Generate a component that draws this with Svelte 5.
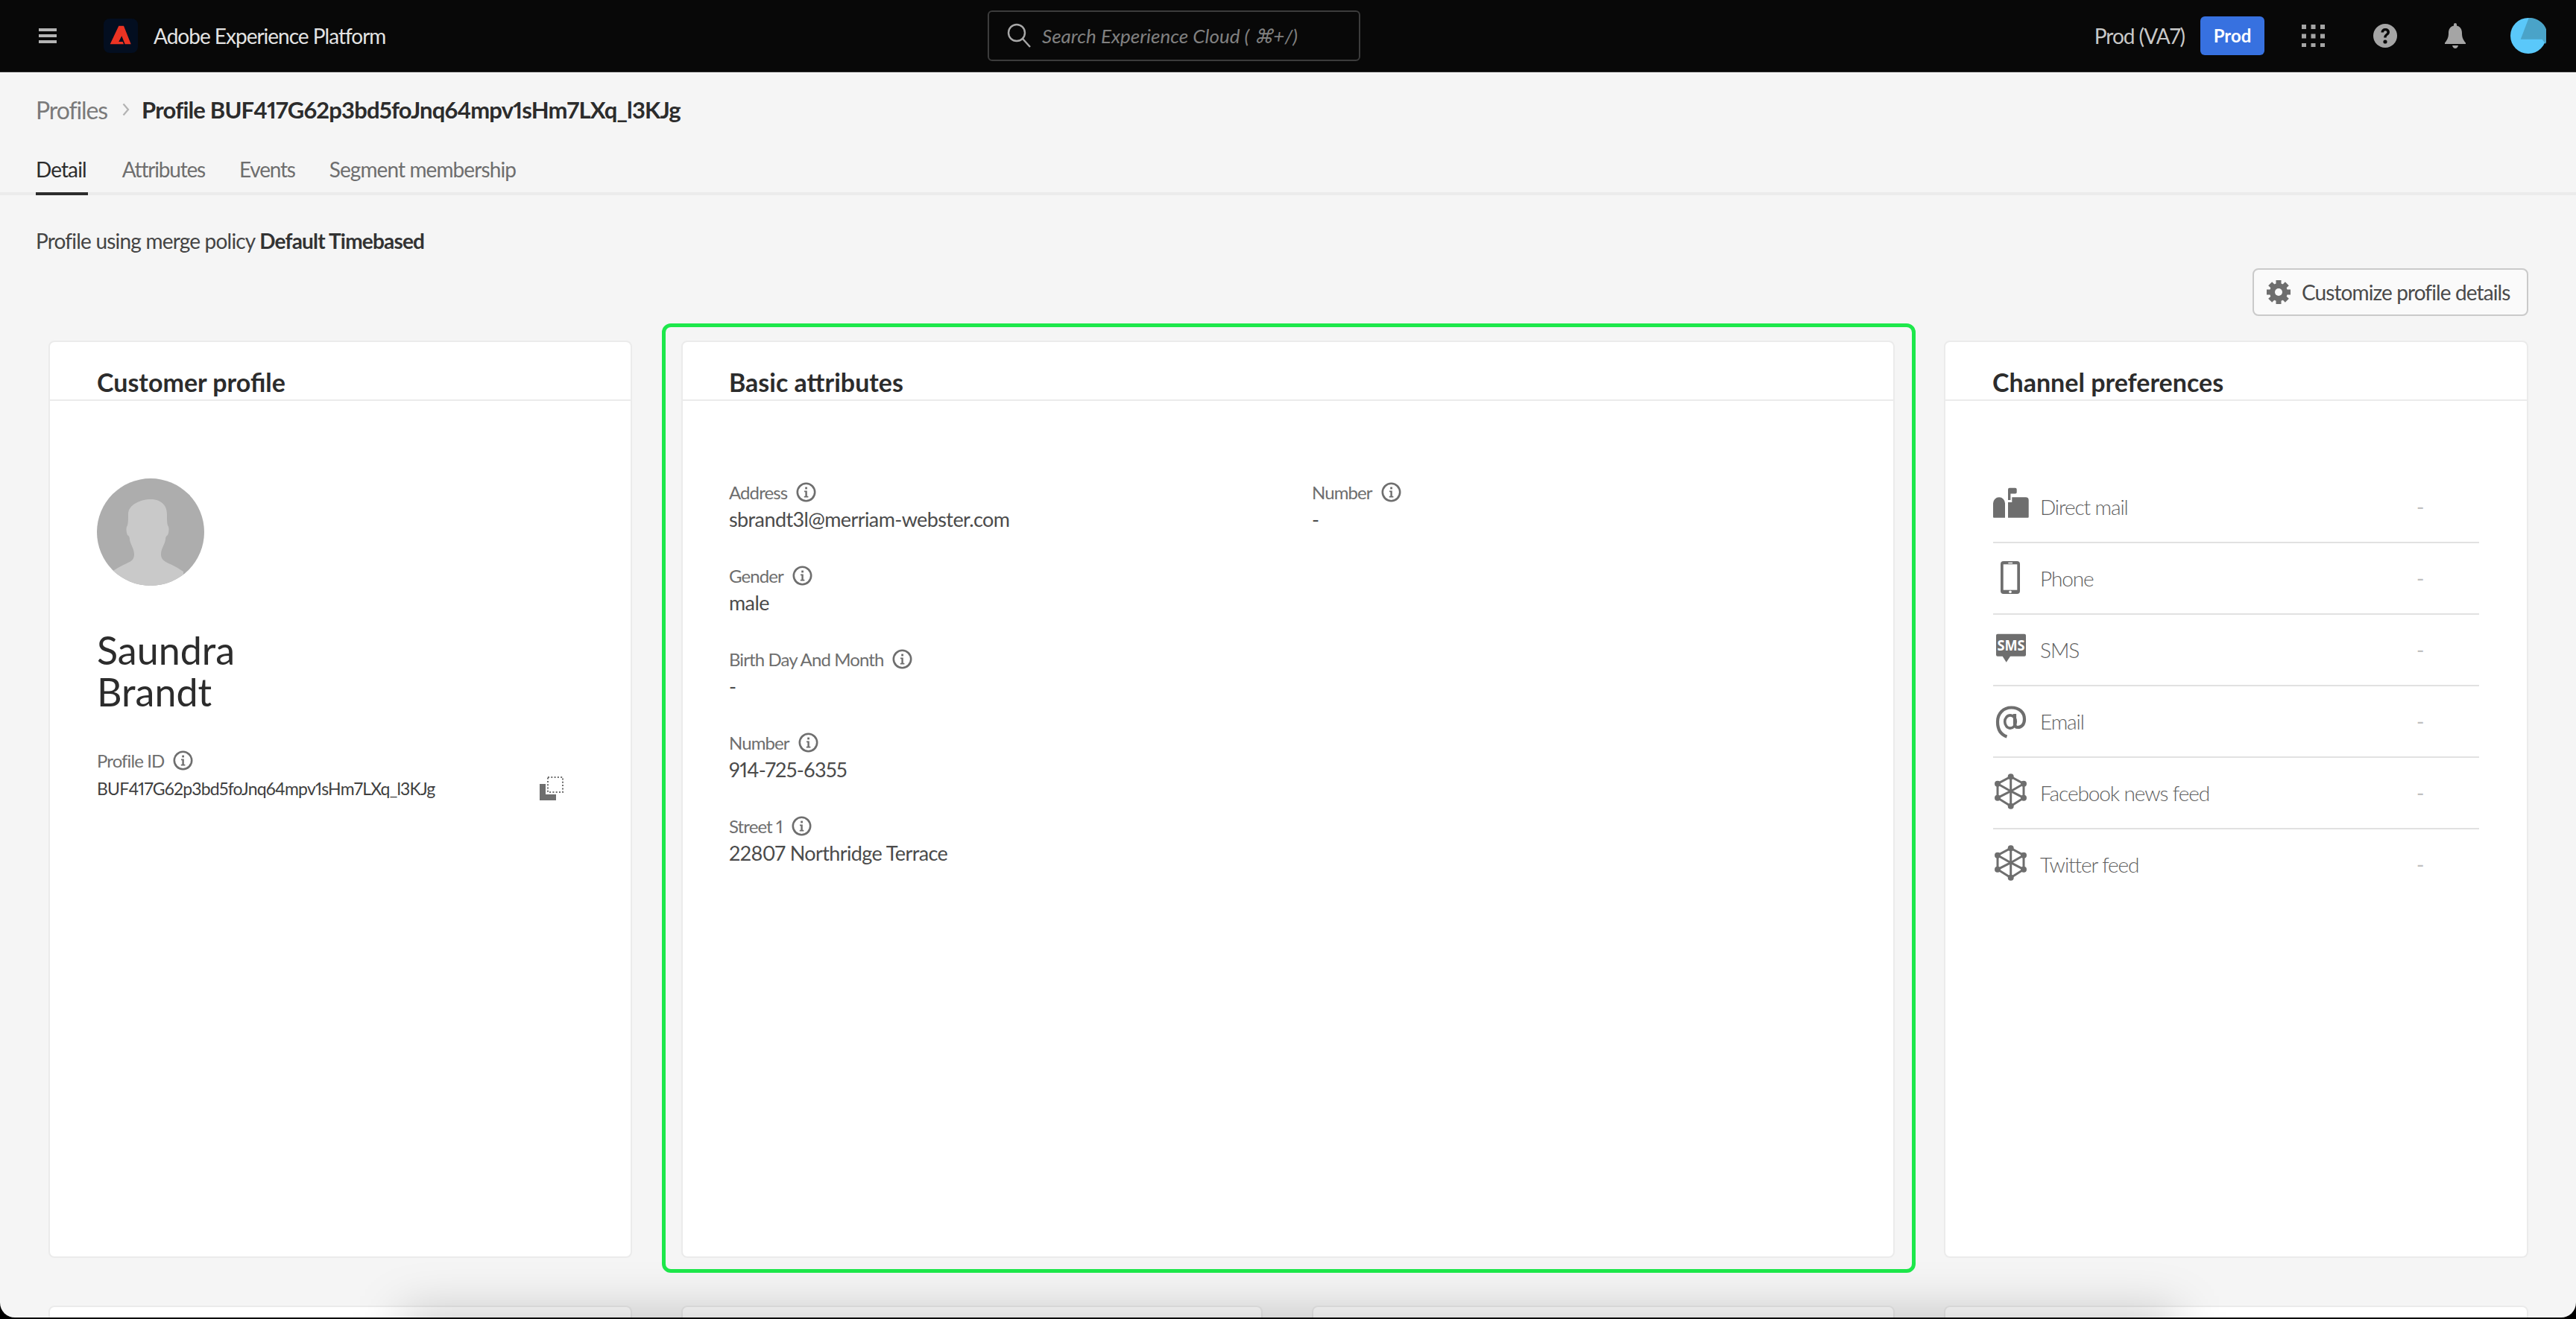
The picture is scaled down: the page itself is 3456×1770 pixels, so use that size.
<script>
	const tabs = ['Detail', 'Attributes', 'Events', 'Segment membership'];
	const fields = [
		{ label: 'Address', value: 'sbrandt3l@merriam-webster.com' },
		{ label: 'Gender', value: 'male' },
		{ label: 'Birth Day And Month', value: '-' },
		{ label: 'Number', value: '914-725-6355' },
		{ label: 'Street 1', value: '22807 Northridge Terrace' }
	];
	const channels = [
		{ name: 'Direct mail', icon: 'mail' },
		{ name: 'Phone', icon: 'phone' },
		{ name: 'SMS', icon: 'sms' },
		{ name: 'Email', icon: 'email' },
		{ name: 'Facebook news feed', icon: 'net' },
		{ name: 'Twitter feed', icon: 'net' }
	];
	const hex = [
		[23.7, 2.3],
		[41, 11.7],
		[41, 30.7],
		[23.7, 41.7],
		[6, 30.7],
		[6, 11.7]
	];
	const teeth = [0, 45, 90, 135, 180, 225, 270, 315];
</script>

{#snippet info()}
	<svg class="info" viewBox="0 0 27 27" width="27" height="27">
		<circle cx="13.5" cy="13.5" r="11.7" fill="none" stroke="#6e6e6e" stroke-width="2.6" />
		<rect x="12.2" y="6.6" width="2.8" height="2.8" fill="#6e6e6e" />
		<path d="M11 11.6h3.8v7.2h1.6v1.6h-5.6v-1.6h1.6v-5.6h-1.4z" fill="#6e6e6e" />
	</svg>
{/snippet}

<div class="page">
	<header class="topbar">
		<button class="menu" aria-label="Menu"><span></span><span></span><span></span></button>
		<div class="logo">
			<svg viewBox="0 0 46 46" width="46" height="46">
				<polygon
					points="8.7,34.3 20.3,9.7 27,9.7 36.7,34.3 28.7,34.3 24.3,23.3 20.3,31 25.7,31 27,34.3"
					fill="#eb3323"
				/>
			</svg>
		</div>
		<div class="product">Adobe Experience Platform</div>
		<div class="search">
			<svg viewBox="0 0 32 34" width="32" height="34">
				<circle cx="13" cy="13" r="11" fill="none" stroke="#a8a8a8" stroke-width="2.4" />
				<path d="M21 21l10 11" stroke="#a8a8a8" stroke-width="2.4" fill="none" />
			</svg>
			<span>Search Experience Cloud ( ⌘+/)</span>
		</div>
		<div class="right">
			<span class="org">Prod (VA7)</span>
			<span class="badge">Prod</span>
			<svg class="apps" viewBox="0 0 31 30" width="31" height="30">
				{#each [0, 12.5, 25] as y}
					{#each [0, 12.5, 25] as x}
						<rect {x} {y} width="6" height="6" fill="#a5a5a5" />
					{/each}
				{/each}
			</svg>
			<svg class="help" viewBox="0 0 32 32" width="32" height="32">
				<circle cx="16" cy="16" r="16" fill="#a5a5a5" />
				<path
					d="M10.5 11.5c0-3.5 2.5-5.5 5.8-5.5 3.4 0 5.7 2 5.7 5 0 2.3-1.2 3.5-2.7 4.6-1.2.9-1.6 1.5-1.6 3h-3.5c0-2.6.8-3.7 2.3-4.9 1.200-.9 1.900-1.500 1.900-2.600 0-1.100-.8-1.900-2.100-1.900-1.400 0-2.200.9-2.300 2.300z"
					fill="#080808"
				/>
				<circle cx="16" cy="24" r="2.600" fill="#080808" />
			</svg>
			<svg class="bell" viewBox="0 0 28 34" width="28" height="34">
				<path
					d="M14 0c1.300 0 2 .9 2 2.200v1.300c4.800 1 7 4.800 7 10 0 5 1.200 8.700 5 13V28H0v-1.500c3.800-4.300 5-8 5-13 0-5.200 2.200-9 7-10V2.200C12 .9 12.700 0 14 0z"
					fill="#a5a5a5"
				/>
				<path d="M10 30h8c-.6 2.500-2.200 4-4 4s-3.400-1.500-4-4z" fill="#a5a5a5" />
			</svg>
			<svg class="user" viewBox="0 0 48 48" width="48" height="48">
				<circle cx="24" cy="24" r="24" fill="#5ac8fa" />
				<path d="M24.700 0L13.700 28.700H42.700L47 35A24 24 0 0 0 24.700 0z" fill="#4aa3c8" />
			</svg>
		</div>
	</header>

	<nav class="crumbs">
		<span class="crumb-root">Profiles</span>
		<svg viewBox="0 0 10 18" width="10" height="18">
			<path d="M1.500 1.500L8 9l-6.500 7.500" fill="none" stroke="#b3b3b3" stroke-width="2.200" />
		</svg>
		<span class="crumb-current">Profile BUF417G62p3bd5foJnq64mpv1sHm7LXq_l3KJg</span>
	</nav>

	<div class="tabs">
		{#each tabs as tab, i}
			<span class="tab" class:active={i === 0}>{tab}</span>
		{/each}
	</div>

	<p class="policy">Profile using merge policy <b>Default Timebased</b></p>

	<div class="toolbar">
		<button class="customize">
			<svg viewBox="0 0 32 32" width="32" height="32">
				{#each teeth as a}
					<rect x="12.500" y="0" width="7" height="7" fill="#6e6e6e" transform="rotate({a} 16 16)" />
				{/each}
				<circle cx="16" cy="16" r="12" fill="#6e6e6e" />
				<circle cx="16" cy="16" r="5" fill="#fafafa" />
			</svg>
			Customize profile details
		</button>
	</div>

	<div class="cards">
		<section class="card">
			<h2>Customer profile</h2>
			<div class="profile">
				<svg class="avatar" viewBox="0 0 144 144" width="144" height="144">
					<defs>
						<clipPath id="avatar-clip"><circle cx="72" cy="72" r="72" /></clipPath>
					</defs>
					<circle cx="72" cy="72" r="72" fill="#adadad" />
					<path
						clip-path="url(#avatar-clip)"
						d="M72 28c13 0 22 7 22 20 0 7 0 11 1 15 2 2 2 8 0 13-2 1-3 3-3 6-1 7-6 12-6 20 0 6 4 9 10 12 9 4 14 7 20 11v20H20v-20c6-4 12-7 20-11 7-3 10-6 10-12 0-8-5-13-6-20 0-3-1-5-3-6-2-5-2-11 0-13 1-4 1-8 1-15 0-13 17-20 30-20z"
						fill="#c9c9c9"
					/>
				</svg>
				<h1 class="name">Saundra<br />Brandt</h1>
				<div class="label">Profile ID {@render info()}</div>
				<div class="id-row">
					<span class="id">BUF417G62p3bd5foJnq64mpv1sHm7LXq_l3KJg</span>
					<svg class="copy" viewBox="0 0 32 32" width="32" height="32">
						<path d="M0 10h8v14h14v8H0z" fill="#6e6e6e" />
						<rect
							x="11"
							y="1"
							width="20"
							height="20"
							fill="none"
							stroke="#6e6e6e"
							stroke-width="2"
							stroke-dasharray="2 2.300"
						/>
					</svg>
				</div>
			</div>
		</section>

		<section class="card wide">
			<h2>Basic attributes</h2>
			<div class="attrs">
				<div class="col">
					{#each fields as f}
						<div class="field">
							<div class="label">{f.label} {@render info()}</div>
							<div class="value">{f.value}</div>
						</div>
					{/each}
				</div>
				<div class="col">
					<div class="field">
						<div class="label">Number {@render info()}</div>
						<div class="value">-</div>
					</div>
				</div>
			</div>
		</section>

		<section class="card">
			<h2>Channel preferences</h2>
			<ul class="channels">
				{#each channels as c}
					<li>
						<svg class="channel-icon" viewBox="0 0 48 48" width="48" height="48">
							{#if c.icon === 'mail'}
								<g fill="#6e6e6e">
									<path d="M1 38.700a1 1 0 0 1-1-1V19.300a8 8 0 0 1 16 0v19.400z" />
									<path d="M20 38.700V18h5.300v-6.700H43.700a4 4 0 0 1 4 4v22.400a1 1 0 0 1-1 1z" />
									<rect x="20" y="-1.300" width="11.700" height="7.700" rx="2" />
									<rect x="20" y="5" width="3.400" height="10" />
								</g>
							{:else if c.icon === 'phone'}
								<rect x="10" y="1" width="26" height="44" rx="4" fill="#6e6e6e" />
								<rect x="13.700" y="5.300" width="18.600" height="34.400" fill="#fff" />
								<rect x="20.300" y="2.800" width="5.700" height="1.400" fill="#fff" />
								<circle cx="23" cy="42.300" r="1.800" fill="#fff" />
							{:else if c.icon === 'sms'}
								<path
									d="M6 2.700h36a2 2 0 0 1 2 2v26a2 2 0 0 1-2 2H23l-5.300 8-5-8H6a2 2 0 0 1-2-2v-26a2 2 0 0 1 2-2z"
									fill="#6e6e6e"
								/>
								<text class="sms-text" x="24" y="24.500" text-anchor="middle" textLength="37" lengthAdjust="spacingAndGlyphs">SMS</text>
							{:else if c.icon === 'email'}
								<path
									d="M18.500 44.500C9 41.500 6 33 6 24.500 6 13 14 5.500 24.500 5.500 35 5.500 42 12 42 21c0 7-3.500 11-9 11-3 0-4-2.500-4-5V14"
									fill="none"
									stroke="#6e6e6e"
									stroke-width="4.200"
								/>
								<ellipse cx="23" cy="24.500" rx="7.300" ry="8.600" fill="none" stroke="#6e6e6e" stroke-width="3.600" />
							{:else}
								<g fill="#6e6e6e" stroke="#6e6e6e" stroke-width="3">
									<polygon points={hex.map((p) => p.join(',')).join(' ')} fill="none" />
									{#each hex as p}
										<line x1="23.700" y1="21.700" x2={p[0]} y2={p[1]} />
										<circle cx={p[0]} cy={p[1]} r="2.500" />
									{/each}
								</g>
							{/if}
						</svg>
						<span class="channel-name">{c.name}</span>
						<span class="channel-value">-</span>
					</li>
				{/each}
			</ul>
		</section>

		<section class="card"></section>
		<section class="card"></section>
		<section class="card"></section>
		<section class="card"></section>
	</div>

	<div class="highlight"></div>
	<div class="shade"></div>
</div>

<style>
	:global(body) {
		background: #000;
	}

	.page {
		position: relative;
		height: 1768px;
		overflow: hidden;
		background: #f5f5f5;
		border-radius: 0 0 20px 20px;
		font-family: Lato, 'Noto Sans', sans-serif;
		font-variant-numeric: proportional-nums;
		color: #2c2c2c;
	}

	.topbar {
		display: flex;
		align-items: center;
		height: 96px;
		background: #080808;
		border-bottom: 1px solid #2a2a2a;
	}

	.menu {
		display: flex;
		flex-direction: column;
		gap: 4px;
		width: 24px;
		margin-left: 52px;
		padding: 0;
		border: 0;
		background: none;
	}

	.menu span {
		height: 4px;
		background: #b4b4b4;
	}

	.logo {
		width: 46px;
		height: 46px;
		margin-left: 63px;
		background: #030e20;
		border-radius: 8px;
	}

	.product {
		width: 311px;
		margin-left: 21px;
		font-size: 28px;
		letter-spacing: -1px;
		white-space: nowrap;
		color: #e3e3e3;
	}

	.search {
		display: flex;
		align-items: center;
		gap: 15px;
		width: 500px;
		height: 68px;
		box-sizing: border-box;
		margin-left: 808px;
		padding-left: 24px;
		border: 2px solid #3c3c3c;
		border-radius: 6px;
		font-size: 26px;
		font-style: italic;
		color: #808080;
	}

	.right {
		display: flex;
		align-items: center;
		margin-left: auto;
		padding-right: 40px;
	}

	.org {
		font-size: 28px;
		letter-spacing: -1px;
		color: #c8c8c8;
	}

	.badge {
		width: 86px;
		height: 52px;
		margin-left: 21px;
		background: #3771e0;
		border-radius: 6px;
		font-size: 24px;
		font-weight: 700;
		line-height: 52px;
		text-align: center;
		color: #fff;
	}

	.apps {
		margin-left: 50px;
	}

	.help {
		margin-left: 65px;
	}

	.bell {
		margin-left: 64px;
	}

	.user {
		margin-left: 60px;
	}

	.crumbs {
		display: flex;
		align-items: center;
		height: 40px;
		margin-top: 30px;
		padding-left: 48px;
		font-size: 32px;
	}

	.crumbs svg {
		margin: 0 16px 0 20px;
	}

	.crumb-root {
		letter-spacing: -1.1px;
		color: #7a7a7a;
	}

	.crumb-current {
		font-size: 31px;
		font-weight: 700;
		letter-spacing: -0.82px;
		color: #2c2c2c;
	}

	.tabs {
		display: flex;
		gap: 46px;
		height: 62px;
		margin-top: 29px;
		padding-left: 48px;
		border-bottom: 4px solid #ebebeb;
	}

	.tab {
		height: 62px;
		font-size: 28px;
		letter-spacing: -1.2px;
		line-height: 62px;
		color: #6e6e6e;
	}

	.tab:last-child {
		letter-spacing: -0.9px;
	}

	.tab.active {
		height: 66px;
		padding-right: 2px;
		letter-spacing: -0.9px;
		box-shadow: inset 0 -4px 0 #2c2c2c;
		color: #2c2c2c;
	}

	.policy {
		height: 36px;
		margin: 43px 0 0;
		padding-left: 48px;
		font-size: 28px;
		letter-spacing: -0.8px;
		line-height: 36px;
		color: #444;
	}

	.policy b {
		font-weight: 700;
		color: #333;
	}

	.toolbar {
		display: flex;
		justify-content: flex-end;
		margin-top: 19px;
		padding-right: 64px;
	}

	.customize {
		display: flex;
		align-items: center;
		gap: 15px;
		width: 370px;
		height: 64px;
		padding: 0 0 0 17px;
		background: #fafafa;
		border: 2px solid #cacaca;
		border-radius: 8px;
		font: inherit;
		font-size: 28px;
		letter-spacing: -0.9px;
		white-space: nowrap;
		color: #4b4b4b;
	}

	.cards {
		display: grid;
		grid-template-columns: 783px 780px 782px 784px;
		grid-auto-rows: 1231px;
		gap: 64px 66px;
		margin-top: 33px;
		padding-left: 65px;
	}

	.card {
		box-sizing: border-box;
		background: #fff;
		border: 2px solid #ebebeb;
		border-radius: 8px;
	}

	.wide {
		grid-column: span 2;
	}

	h2 {
		height: 79px;
		box-sizing: border-box;
		margin: 0;
		padding: 34px 0 0 63px;
		border-bottom: 2px solid #ebebeb;
		font-size: 34px;
		font-weight: 700;
		line-height: 40px;
		color: #2c2c2c;
	}

	.wide h2 {
		padding-left: 62px;
	}

	.profile {
		padding: 104px 90px 0 63px;
	}

	.avatar {
		display: block;
	}

	.name {
		margin: 58px 0 0;
		font-size: 52px;
		font-weight: 400;
		line-height: 56px;
		color: #2c2c2c;
	}

	.label {
		display: flex;
		align-items: center;
		gap: 12px;
		height: 32px;
		font-size: 24px;
		letter-spacing: -0.9px;
		color: #6e6e6e;
	}

	.profile .label {
		margin-top: 48px;
	}

	.id-row {
		display: flex;
		align-items: center;
		justify-content: space-between;
		margin-top: 5px;
	}

	.id {
		font-size: 23px;
		letter-spacing: -0.8px;
		line-height: 34px;
		color: #3f3f3f;
	}

	.attrs {
		display: grid;
		grid-template-columns: 782px 1fr;
		padding: 106px 0 0 62px;
	}

	.col {
		display: flex;
		flex-direction: column;
		gap: 41px;
	}

	.value {
		margin-top: 3px;
		font-size: 27px;
		letter-spacing: -0.6px;
		line-height: 36px;
		color: #4b4b4b;
	}

	.channels {
		margin: 0;
		padding: 95px 64px 0;
		list-style: none;
	}

	.channels li {
		display: flex;
		align-items: center;
		height: 94px;
		border-bottom: 2px solid #e1e1e1;
	}

	.channels li:last-child {
		border-bottom: 0;
	}

	.channel-icon {
		flex: none;
		overflow: visible;
	}

	.sms-text {
		font-family: 'Open Sans', sans-serif;
		font-size: 20px;
		font-weight: 700;
		fill: #fff;
	}

	.channel-name {
		flex: 1;
		margin-left: 15px;
		font-size: 28px;
		font-weight: 300;
		letter-spacing: -1.1px;
		color: #5f5f5f;
	}

	.channel-value {
		width: 84px;
		font-size: 28px;
		color: #c0c0c0;
	}

	.highlight {
		position: absolute;
		left: 888px;
		top: 434px;
		width: 1682px;
		height: 1274px;
		box-sizing: border-box;
		border: 5px solid #1ee84b;
		border-radius: 12px;
	}

	.shade {
		position: absolute;
		left: 540px;
		top: 1760px;
		width: 2380px;
		height: 120px;
		background: rgba(0, 0, 0, 0.2);
		filter: blur(32px);
	}
</style>
